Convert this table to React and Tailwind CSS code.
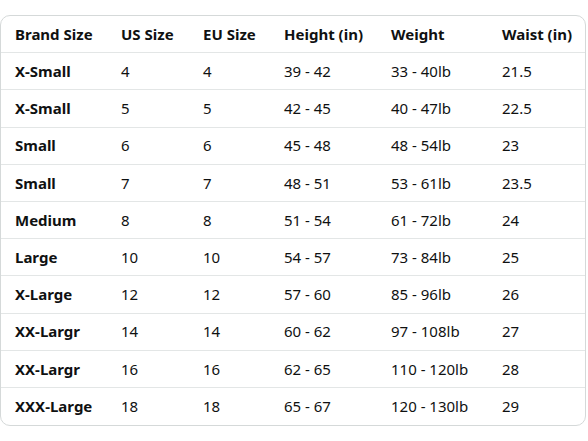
import React from "react";

const headers = ["Brand Size", "US Size", "EU Size", "Height (in)", "Weight", "Waist (in)"];

const rows = [
  ["X-Small", "4", "4", "39 - 42", "33 - 40lb", "21.5"],
  ["X-Small", "5", "5", "42 - 45", "40 - 47lb", "22.5"],
  ["Small", "6", "6", "45 - 48", "48 - 54lb", "23"],
  ["Small", "7", "7", "48 - 51", "53 - 61lb", "23.5"],
  ["Medium", "8", "8", "51 - 54", "61 - 72lb", "24"],
  ["Large", "10", "10", "54 - 57", "73 - 84lb", "25"],
  ["X-Large", "12", "12", "57 - 60", "85 - 96lb", "26"],
  ["XX-Largr", "14", "14", "60 - 62", "97 - 108lb", "27"],
  ["XX-Largr", "16", "16", "62 - 65", "110 - 120lb", "28"],
  ["XXX-Large", "18", "18", "65 - 67", "120 - 130lb", "29"],
];

const Row = ({ cells, head, last }) => (
  <div
    className={`grid grid-cols-[106px_82px_81px_107px_111px_1fr] h-[37.2px] items-center ${
      last ? "" : "border-b border-[#e3e6e6]"
    }`}
  >
    {cells.map((c, i) => (
      <div key={i} className={`pl-[14px] whitespace-nowrap ${head || i === 0 ? "font-bold" : ""}`}>
        {c}
      </div>
    ))}
  </div>
);

export default function App() {
  return (
    <div className="bg-white w-[588px] h-[441px] pt-[15px] text-[15px] text-[#0f1111] font-['Noto_Sans',sans-serif]">
      <div className="w-[586px] border border-[#d5d9d9] rounded-[10px] overflow-hidden">
        <Row cells={headers} head />
        {rows.map((r, i) => (
          <Row key={i} cells={r} last={i === rows.length - 1} />
        ))}
      </div>
    </div>
  );
}
